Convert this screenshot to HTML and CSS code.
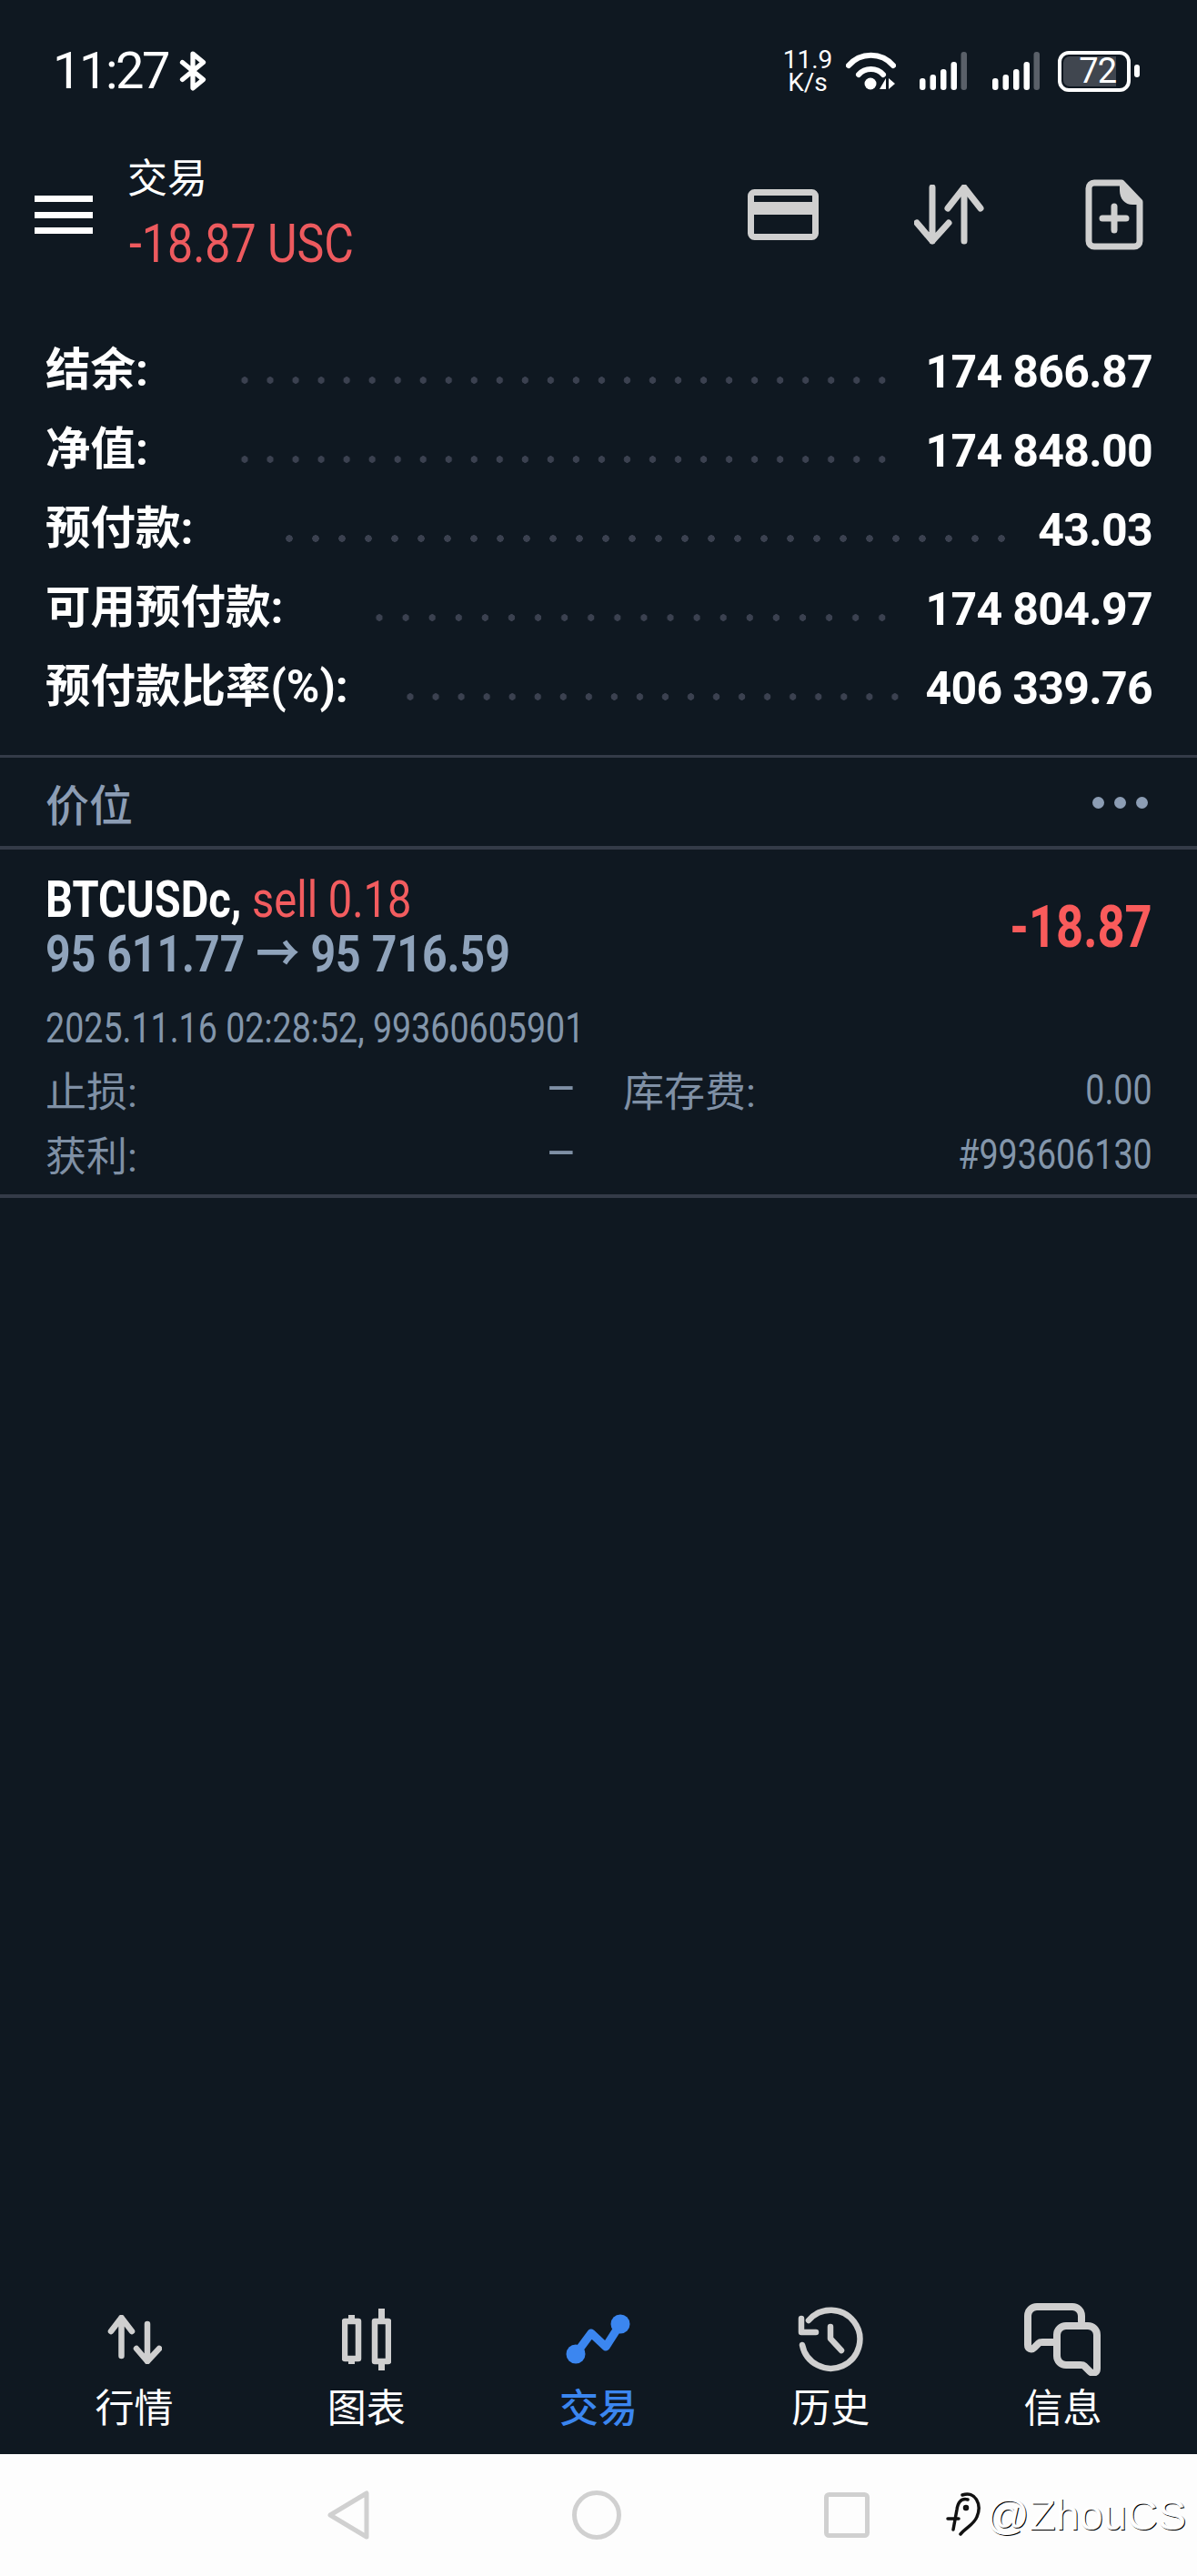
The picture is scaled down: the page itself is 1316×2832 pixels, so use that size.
FILE: index.html
```html
<!DOCTYPE html>
<html lang="zh-CN">
<head>
    <meta charset="UTF-8">
    <meta name="viewport" content="width=device-width, initial-scale=1.0">
    <title>交易</title>
    <link rel="stylesheet" href="styles.css">
</head>
<body>
<div class="screen">
    <!-- 状态栏 -->
    <div class="statusbar">
        <span class="time">11:27</span>
        <svg class="ic-bt" viewBox="0 0 30 42"><path d="M4 12 L26 30 L15 39 V3 L26 12 L4 30"/></svg>
        <div class="status-right">
            <div class="speed"><span>11.9</span><span>K/s</span></div>
            <svg class="ic-wifi" viewBox="0 0 55 42">
                <path class="arc" d="M3 15 C16 0 39 0 52 15"/>
                <path class="arc" d="M14 25 C21 17 34 17 41 25"/>
                <circle cx="27" cy="35" r="6.5" fill="#fff"/>
                <path d="M44 29 V41 H37z M47 29 V41 L54 35z" fill="#fff"/>
            </svg>
            <svg class="ic-signal" viewBox="0 0 52 42">
                <rect x="0" y="29" width="6.5" height="13" rx="3" fill="#fff"/>
                <rect x="11.5" y="25" width="6.5" height="17" rx="3" fill="#fff"/>
                <rect x="23" y="19" width="6.5" height="23" rx="3" fill="#fff"/>
                <rect x="34.5" y="11" width="6.5" height="31" rx="3" fill="#fff"/>
                <rect x="45.5" y="0" width="6.5" height="42" rx="3" fill="#5a6069"/>
            </svg>
            <svg class="ic-signal ic-signal2" viewBox="0 0 52 42">
                <rect x="0" y="29" width="6.5" height="13" rx="3" fill="#fff"/>
                <rect x="11.5" y="25" width="6.5" height="17" rx="3" fill="#fff"/>
                <rect x="23" y="19" width="6.5" height="23" rx="3" fill="#fff"/>
                <rect x="34.5" y="11" width="6.5" height="31" rx="3" fill="#fff"/>
                <rect x="45.5" y="0" width="6.5" height="42" rx="3" fill="#5a6069"/>
            </svg>
            <div class="battery"><div class="battery-level">72</div></div>
            <div class="battery-nub"></div>
        </div>
    </div>

    <!-- 顶部 -->
    <div class="header">
        <div class="menu"><i></i><i></i><i></i></div>
        <div class="header-text">
            <div class="header-title">交易</div>
            <div class="header-sub"><span class="narrow sub-num">-18.87 USC</span></div>
        </div>
        <div class="header-icons">
            <svg class="ic-card" viewBox="0 0 78 56">
                <rect x="3.5" y="3.5" width="71" height="49" rx="4"/>
                <rect class="solid" x="3.5" y="14" width="71" height="14"/>
            </svg>
            <svg class="ic-swap" viewBox="0 0 78 66">
                <path d="M20 3 V62 M3 42 L20 62 L38 42 M55 62 V3 M37 26 L55 3 L73 26"/>
            </svg>
            <svg class="ic-file" viewBox="0 0 64 78">
                <path d="M10 4 H40 L60 25 V68 a6 6 0 0 1 -6 6 H10 a6 6 0 0 1 -6 -6 V10 a6 6 0 0 1 6 -6z"/>
                <path class="solid" d="M38 4 L60 25 V28 H52 C44 28 38 22 38 12z"/>
                <path d="M32 30 V56 M19 43 H45"/>
            </svg>
        </div>
    </div>

    <!-- 账户 -->
    <div class="stats">
        <div class="stat"><span class="stat-label">结余:</span><span class="dots"></span><span class="stat-value">174 866.87</span></div>
        <div class="stat"><span class="stat-label">净值:</span><span class="dots"></span><span class="stat-value">174 848.00</span></div>
        <div class="stat"><span class="stat-label">预付款:</span><span class="dots"></span><span class="stat-value">43.03</span></div>
        <div class="stat"><span class="stat-label">可用预付款:</span><span class="dots"></span><span class="stat-value">174 804.97</span></div>
        <div class="stat"><span class="stat-label">预付款比率(%):</span><span class="dots"></span><span class="stat-value">406 339.76</span></div>
    </div>

    <div class="section-head">
        <span>价位</span>
        <div class="more"><i></i><i></i><i></i></div>
    </div>

    <!-- 持仓 -->
    <div class="position">
        <div class="pos-top">
            <div>
                <div class="pos-line"><span class="narrow pos-narrow"><b>BTCUSDc,</b> <span class="red">sell 0.18</span></span></div>
                <div class="pos-line pos-price"><span class="narrow price-narrow"><b>95 611.77 → 95 716.59</b></span></div>
            </div>
            <div class="pos-profit"><span class="narrow narrow-r">-18.87</span></div>
        </div>
        <div class="pos-date"><span class="narrow">2025.11.16 02:28:52, 99360605901</span></div>
        <div class="pos-grid">
            <div class="cell"><span>止损:</span><span class="dash">–</span></div>
            <div class="cell"><span>库存费:</span><span class="narrow narrow-r">0.00</span></div>
            <div class="cell"><span>获利:</span><span class="dash">–</span></div>
            <div class="cell"><span></span><span class="narrow narrow-r">#993606130</span></div>
        </div>
    </div>

    <div class="spacer"></div>

    <!-- 底部导航 -->
    <div class="tabs">
        <div class="tab">
            <div class="tab-icon"><svg width="60" height="54" viewBox="0 0 60 54"><path d="M15.5 45 V3 M4 18 L15.5 3 L27 18 M44 10 V51 M32 37 L44 51 L57 37"/></svg></div>
            <span>行情</span>
        </div>
        <div class="tab">
            <div class="tab-icon"><svg width="54" height="68" viewBox="0 0 54 68">
                <rect x="3" y="14" width="15" height="41"/>
                <rect x="36" y="14" width="15" height="44"/>
                <path class="butt" d="M10.500 7 V14 M10.500 55 V61 M43.500 0 V14 M43.500 58 V68"/>
            </svg></div>
            <span>图表</span>
        </div>
        <div class="tab active">
            <div class="tab-icon"><svg width="72" height="58" viewBox="0 0 72 58">
                <path d="M11 45 L28 22 L44 37 L60 12"/>
                <circle cx="11" cy="45" r="10.500"/>
                <circle cx="60" cy="12" r="10.500"/>
            </svg></div>
            <span>交易</span>
        </div>
        <div class="tab">
            <div class="tab-icon"><svg width="75" height="75" viewBox="0 0 75 75">
                <path d="M6 43 A32 32 0 1 0 13 16 M5 14 V29 H21"/>
                <path d="M37 23 V36 L49 49"/>
            </svg></div>
            <span>历史</span>
        </div>
        <div class="tab">
            <div class="tab-icon"><svg width="84" height="80" viewBox="0 0 84 80">
                <path d="M63 20 V14 a10 10 0 0 0 -10 -10 H14 a10 10 0 0 0 -10 10 V46 c0 4 4 6 7 3 l5 -5 c1 -1 2 -1 4 -1 H35"/>
                <path d="M46 25 H70 a10 10 0 0 1 10 10 V72 c0 5 -5 6 -8 3 l-6 -6 c-1 -1 -2 -1 -4 -1 H46 a10 10 0 0 1 -10 -10 V35 a10 10 0 0 1 10 -10z"/>
            </svg></div>
            <span>信息</span>
        </div>
    </div>

    <!-- 系统导航 -->
    <div class="navbar">
        <svg width="46" height="54" viewBox="0 0 46 54"><path d="M3 27 L43 3 V51z"/></svg>
        <svg width="54" height="54" viewBox="0 0 54 54"><circle cx="27" cy="27" r="24.500"/></svg>
        <svg width="50" height="50" viewBox="0 0 50 50"><rect x="2.500" y="2.500" width="45" height="45" rx="3"/></svg>
        <div class="watermark">
            <svg width="42" height="52" viewBox="0 0 42 52"><path d="M4 30 H16 M26 9 C18 7 15 13 14 20 L10 42 M20 4 C34 -1 42 14 36 28 C33 36 24 40 18 47"/><circle cx="24" cy="18" r="1.500"/></svg>
            <span>@ZhouCS</span>
        </div>
    </div>
</div>
</body>
</html>
```

FILE: styles.css
```css
* {
  box-sizing: border-box;
}
html, body {
  margin: 0;
  padding: 0;
}
body {
  font-family: Roboto, "Noto Sans CJK SC", sans-serif;
  background: #0f1821;
  color: #fff;
}
svg {
  display: block;
}
.screen {
  width: 1316px;
  height: 2832px;
  display: flex;
  flex-direction: column;
  overflow: hidden;
}
/* 窄字体 */
.narrow {
  display: inline-block;
  transform: scaleX(0.8);
  transform-origin: left center;
  white-space: nowrap;
}
.narrow-r {
  transform-origin: right center;
}
.sub-num {
  transform: scaleX(0.835);
}
.pos-narrow {
  transform: scaleX(0.84);
}
.price-narrow {
  transform: scaleX(0.86);
}
.pos-profit .narrow {
  transform: scaleX(0.82);
}
.red {
  color: #f25c5f;
}

/* 状态栏 */
.statusbar {
  height: 156px;
  display: flex;
  align-items: center;
  padding: 0 0 0 58px;
}
.time {
  width: 125px;
  font-size: 56px;
  line-height: 60px;
  letter-spacing: -2.500px;
}
.ic-bt {
  width: 32px;
  height: 44px;
  margin-left: 13px;
  fill: none;
  stroke: #fff;
  stroke-width: 5;
  stroke-linecap: round;
  stroke-linejoin: round;
}
.status-right {
  margin-left: auto;
  display: flex;
  align-items: center;
  padding-right: 63px;
}
.speed {
  display: flex;
  flex-direction: column;
  align-items: center;
  width: 54px;
  font-size: 28px;
  line-height: 25px;
}
.ic-wifi {
  width: 55px;
  height: 42px;
  margin-left: 15px;
}
.arc {
  fill: none;
  stroke: #fff;
  stroke-width: 6;
  stroke-linecap: round;
}
.ic-signal {
  width: 52px;
  height: 42px;
  margin-left: 26px;
}
.ic-signal2 {
  margin-left: 28px;
}
.battery {
  width: 80px;
  height: 45px;
  margin-left: 20px;
  border: 4px solid #fff;
  border-radius: 12px;
  padding: 2px;
}
.battery-level {
  width: 58px;
  height: 33px;
  background: #40464f;
  border-radius: 7px 0 0 7px;
  font-size: 38px;
  line-height: 33px;
  text-align: right;
  letter-spacing: -1px;
}
.battery-nub {
  width: 6px;
  height: 14px;
  margin-left: 4px;
  background: #fff;
  border-radius: 3px;
}

/* 顶部 */
.header {
  height: 160px;
  display: flex;
  align-items: center;
  padding: 0 59px 0 38px;
}
.menu {
  width: 64px;
  height: 42px;
  display: flex;
  flex-direction: column;
  justify-content: space-between;
}
.menu i {
  display: block;
  height: 7px;
  background: #fff;
}
.header-text {
  margin-left: 40px;
}
.header-title {
  font-size: 44px;
  line-height: 64px;
  margin-left: -2px;
}
.header-sub {
  font-size: 60px;
  line-height: 78px;
  color: #ed5a5e;
}
.header-icons {
  margin-left: auto;
  display: flex;
  align-items: center;
}
.header-icons svg {
  fill: none;
  stroke: #cfcfcf;
  stroke-width: 7;
  stroke-linecap: round;
  stroke-linejoin: round;
}
.header-icons .solid {
  fill: #cfcfcf;
  stroke: none;
}
.ic-card {
  width: 78px;
  height: 56px;
}
.ic-swap {
  width: 78px;
  height: 66px;
  margin-left: 105px;
}
.ic-file {
  width: 64px;
  height: 78px;
  margin-left: 110px;
}

/* 账户 */
.stats {
  padding: 49px 49px 30px 50px;
}
.stat {
  height: 87px;
  display: flex;
  align-items: center;
}
.stat-label {
  font-size: 49.500px;
  font-weight: 700;
  line-height: 60px;
  margin-top: -3px;
}
.stat-value {
  font-size: 50px;
  font-weight: 700;
  letter-spacing: -0.700px;
}
.dots {
  flex: 1;
  height: 8px;
  margin: 18px 34px 0 92px;
  background-image: radial-gradient(circle, #3b4150 3.500px, transparent 4px);
  background-size: 28px 8px;
  background-repeat: space no-repeat;
}
.stat:nth-child(3) .dots {
  margin-right: 26px;
}
.stat:nth-child(5) .dots {
  margin: 18px 20px 0 54px;
}

/* 价位 */
.section-head {
  height: 104px;
  display: flex;
  align-items: center;
  justify-content: space-between;
  padding: 0 54px 0 50px;
  border-top: 3px solid #343b48;
  border-bottom: 4px solid #343b48;
  font-size: 48px;
  font-weight: 500;
  color: #8c9db4;
}
.more {
  display: flex;
  gap: 11px;
  margin-top: 2px;
}
.more i {
  display: block;
  width: 13px;
  height: 13px;
  border-radius: 50%;
  background: #8c9db4;
}

/* 持仓 */
.position {
  padding: 25px 49px 9px 50px;
  border-bottom: 4px solid #343b48;
}
.pos-top {
  display: flex;
  align-items: center;
  justify-content: space-between;
}
.pos-line {
  font-size: 56px;
  line-height: 60px;
  white-space: nowrap;
}
.pos-price {
  color: #8fa3bb;
}
.pos-profit {
  font-size: 64px;
  font-weight: 700;
  color: #f95b5b;
}
.pos-date {
  margin-top: 21px;
  font-size: 47px;
  line-height: 60px;
  color: #8396ab;
}
.pos-grid {
  margin-top: 2px;
  display: grid;
  grid-template-columns: 1fr 1fr;
  column-gap: 53px;
  font-size: 45px;
  color: #7f90a5;
}
.cell {
  height: 71px;
  display: flex;
  align-items: center;
  justify-content: space-between;
}
.cell .narrow {
  font-size: 47px;
  color: #8396ab;
}
.dash {
  font-size: 52px;
  margin-right: -2px;
}
.spacer {
  flex: 1;
}

/* 底部导航 */
.tabs {
  display: grid;
  grid-template-columns: repeat(5, 1fr);
  padding: 0 20px 26px;
}
.tab {
  display: flex;
  flex-direction: column;
  align-items: center;
  font-size: 43px;
  line-height: 48px;
}
.tab-icon {
  height: 80px;
  margin-bottom: 12px;
  display: flex;
  align-items: center;
}
.tab-icon svg {
  fill: none;
  stroke: #cfcfcf;
  stroke-width: 6.500;
  stroke-linecap: round;
  stroke-linejoin: round;
}
.tab-icon .butt {
  stroke-width: 7;
  stroke-linecap: butt;
}
.tab:last-child .tab-icon svg {
  stroke-width: 8;
}
.tab.active {
  color: #3b86f0;
  font-weight: 500;
}
.tab.active .tab-icon svg {
  stroke: #3b86f0;
  stroke-width: 9;
}
.tab.active circle {
  fill: #3b86f0;
  stroke: none;
}

/* 系统导航 */
.navbar {
  position: relative;
  height: 134px;
  background: #fdfdfd;
  display: flex;
  align-items: center;
  gap: 223px;
  padding-left: 360px;
}
.navbar > svg {
  fill: none;
  stroke: #d0d0d0;
  stroke-width: 5;
  stroke-linejoin: round;
}
.watermark {
  position: absolute;
  left: 1038px;
  top: 40px;
  display: flex;
  align-items: center;
  gap: 4px;
  font-family: "Liberation Sans", sans-serif;
  font-size: 47px;
  line-height: 54px;
  color: #fff;
  text-shadow: 1px 1px 0 #000;
}
.watermark svg {
  fill: none;
  stroke: #111;
  stroke-width: 3.500;
  stroke-linecap: round;
}
```
